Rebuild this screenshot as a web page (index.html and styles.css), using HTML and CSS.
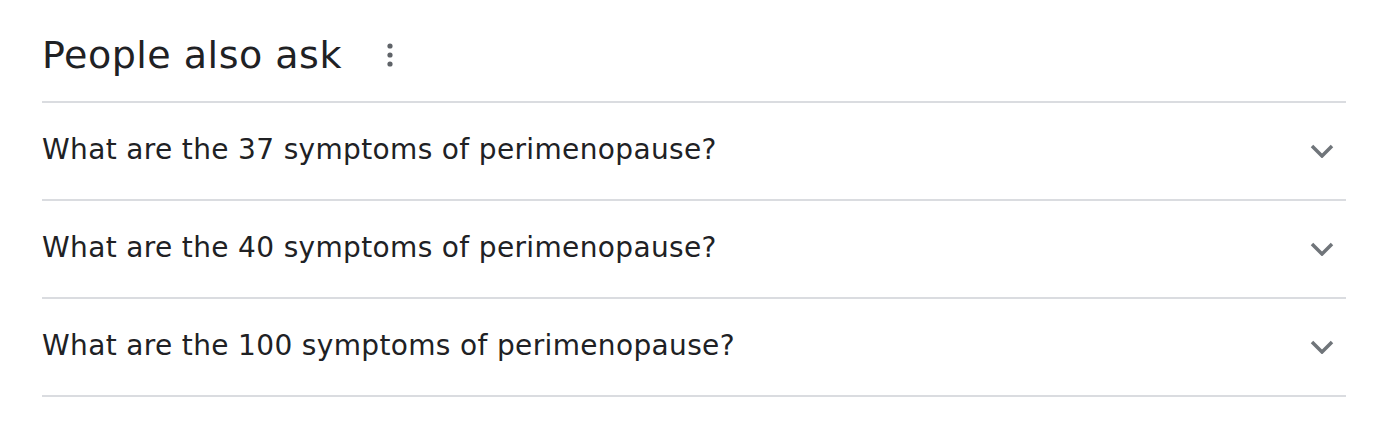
FILE: index.html
```html
<!DOCTYPE html>
<html lang="en">
<head>
    <meta charset="UTF-8">
    <meta name="viewport" content="width=device-width, initial-scale=1.0">
    <title>People also ask</title>
    <link rel="stylesheet" href="styles.css">
</head>
<body>
    <div class="paa">
        <div class="paa-header">
            <h2 class="paa-title">People also ask</h2>
            <button class="more-button" aria-label="More options">
                <svg width="6" height="24" viewBox="0 0 6 24">
                    <circle cx="3" cy="3" r="2.6" />
                    <circle cx="3" cy="12" r="2.6" />
                    <circle cx="3" cy="21" r="2.6" />
                </svg>
            </button>
        </div>

        <div class="question">
            <span class="question-text">What are the 37 symptoms of perimenopause?</span>
            <svg class="chevron" width="24" height="14" viewBox="0 0 24 14">
                <path d="M2 2 L12 12 L22 2" />
            </svg>
        </div>
        <div class="question">
            <span class="question-text">What are the 40 symptoms of perimenopause?</span>
            <svg class="chevron" width="24" height="14" viewBox="0 0 24 14">
                <path d="M2 2 L12 12 L22 2" />
            </svg>
        </div>
        <div class="question">
            <span class="question-text">What are the 100 symptoms of perimenopause?</span>
            <svg class="chevron" width="24" height="14" viewBox="0 0 24 14">
                <path d="M2 2 L12 12 L22 2" />
            </svg>
        </div>
    </div>
</body>
</html>
```

FILE: styles.css
```css
* {
    margin: 0;
    padding: 0;
    box-sizing: border-box;
}

body {
    background: #fff;
    color: #202124;
    font-family: 'DejaVu Sans', Arial, sans-serif;
}

.paa {
    width: 1304px;
    margin-left: 42px;
}

.paa-header {
    display: flex;
    align-items: center;
    gap: 45px;
    height: 103px;
    padding-top: 8px;
    border-bottom: 2px solid #dadce0;
}

.paa-title {
    font-size: 38px;
    font-weight: 400;
    letter-spacing: 0.5px;
}

.more-button {
    display: flex;
    border: none;
    background: none;
    padding: 0;
}

.more-button circle {
    fill: #5f6368;
}

.question {
    display: flex;
    align-items: center;
    justify-content: space-between;
    height: 98px;
    padding-right: 12px;
    border-bottom: 2px solid #dadce0;
}

.question-text {
    font-size: 28px;
    letter-spacing: 0.35px;
    padding-bottom: 4px;
}

.chevron path {
    fill: none;
    stroke: #70757a;
    stroke-width: 3.5;
}
```
